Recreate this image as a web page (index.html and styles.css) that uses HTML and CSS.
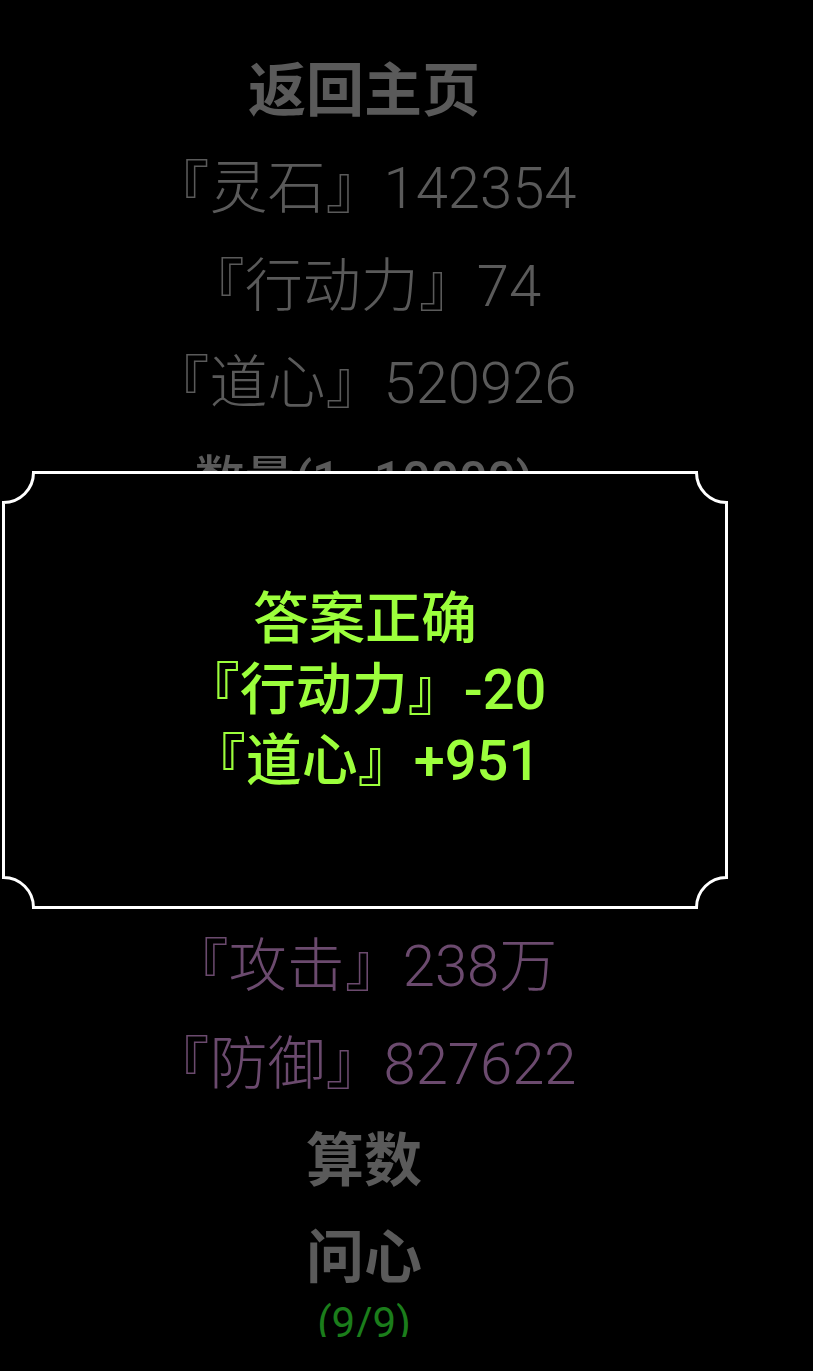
FILE: index.html
```html
<!DOCTYPE html>
<html lang="zh-CN">
<head>
<meta charset="utf-8">
<title>问心</title>
<link rel="stylesheet" href="styles.css">
</head>
<body>
<div class="page">
  <div class="row bold">返回主页</div>
  <div class="row light">『灵石』142354</div>
  <div class="row light">『行动力』74</div>
  <div class="row light">『道心』520926</div>
  <div class="row label">数量(1~10000)</div>
  <div class="covered"></div>
  <div class="row light purple">『攻击』238万</div>
  <div class="row light purple">『防御』827622</div>
  <div class="row bold">算数</div>
  <div class="row bold">问心</div>
  <div class="count">(9/9)</div>
</div>

<div class="modal">
  <svg class="modal-frame" width="726" height="438" viewBox="0 0 726 438" aria-hidden="true">
    <path d="M31.5 1.5 H694.5 A30 30 0 0 0 724.5 31.5 V406.5 A30 30 0 0 0 694.5 436.5 H31.5 A30 30 0 0 0 1.5 406.5 V31.5 A30 30 0 0 0 31.5 1.5 Z" fill="#000" stroke="#fff" stroke-width="3"/>
  </svg>
  <div class="modal-text">
    <div>答案正确</div>
    <div>『行动力』-20</div>
    <div>『道心』+951</div>
  </div>
</div>
</body>
</html>
```
FILE: styles.css
```css
html, body {
  margin: 0;
  padding: 0;
  background: #000;
}
body {
  font-family: Roboto, "Noto Sans CJK SC", sans-serif;
  color: #5a5a5a;
}
.page {
  width: 728px;
  padding-top: 43px;
  text-align: center;
}
.row {
  height: 97.3px;
  line-height: 97.3px;
  font-size: 58px;
  white-space: nowrap;
}
.bold {
  font-weight: 700;
}
.light {
  font-weight: 300;
}
.label {
  font-size: 50px;
  font-weight: 500;
}
.purple {
  color: #6b4a6e;
}
.covered {
  height: 389px;
}
.count {
  font-size: 42px;
  font-weight: 400;
  line-height: 29px;
  color: #1b7d1b;
}
.modal {
  position: fixed;
  left: 2px;
  top: 471px;
  width: 726px;
  height: 438px;
  display: flex;
  align-items: center;
  justify-content: center;
}
.modal-frame {
  position: absolute;
  left: 0;
  top: 0;
}
.modal-text {
  position: relative;
  text-align: center;
  font-size: 56px;
  font-weight: 500;
  line-height: 71px;
  color: #9cff3c;
  white-space: nowrap;
}
```
